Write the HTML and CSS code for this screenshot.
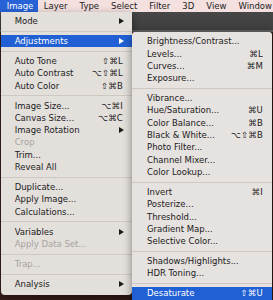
FILE: index.html
```html
<html lang="en">
<head>
    <meta charset="UTF-8">
    <title>Image Menu</title>
    <link rel="stylesheet" href="styles.css">
</head>
<body>

    <!-- Top menu bar -->
    <div class="menubar">
        <span class="title active">Image</span>
        <span class="title">Layer</span>
        <span class="title">Type</span>
        <span class="title">Select</span>
        <span class="title">Filter</span>
        <span class="title">3D</span>
        <span class="title">View</span>
        <span class="title">Window</span>
    </div>

    <!-- App toolbar and canvas behind the menus -->
    <div class="toolbar"></div>
    <div class="canvas"></div>

    <!-- Image menu -->
    <ul class="menu main-menu">
        <li class="item">Mode<i class="arrow"></i></li>
        <li class="sep"></li>
        <li class="item active">Adjustments<i class="arrow"></i></li>
        <li class="sep"></li>
        <li class="item">Auto Tone<span class="key">⇧⌘L</span></li>
        <li class="item">Auto Contrast<span class="key">⌥⇧⌘L</span></li>
        <li class="item">Auto Color<span class="key">⇧⌘B</span></li>
        <li class="sep"></li>
        <li class="item">Image Size...<span class="key">⌥⌘I</span></li>
        <li class="item">Canvas Size...<span class="key">⌥⌘C</span></li>
        <li class="item">Image Rotation<i class="arrow"></i></li>
        <li class="item disabled">Crop</li>
        <li class="item">Trim...</li>
        <li class="item">Reveal All</li>
        <li class="sep"></li>
        <li class="item">Duplicate...</li>
        <li class="item">Apply Image...</li>
        <li class="item">Calculations...</li>
        <li class="sep"></li>
        <li class="item">Variables<i class="arrow"></i></li>
        <li class="item disabled">Apply Data Set...</li>
        <li class="sep"></li>
        <li class="item disabled">Trap...</li>
        <li class="sep"></li>
        <li class="item">Analysis<i class="arrow"></i></li>
    </ul>

    <!-- Adjustments submenu -->
    <ul class="menu sub-menu">
        <li class="item">Brightness/Contrast...</li>
        <li class="item">Levels...<span class="key">⌘L</span></li>
        <li class="item">Curves...<span class="key">⌘M</span></li>
        <li class="item">Exposure...</li>
        <li class="sep"></li>
        <li class="item">Vibrance...</li>
        <li class="item">Hue/Saturation...<span class="key">⌘U</span></li>
        <li class="item">Color Balance...<span class="key">⌘B</span></li>
        <li class="item">Black &amp; White...<span class="key">⌥⇧⌘B</span></li>
        <li class="item">Photo Filter...</li>
        <li class="item">Channel Mixer...</li>
        <li class="item">Color Lookup...</li>
        <li class="sep"></li>
        <li class="item">Invert<span class="key">⌘I</span></li>
        <li class="item">Posterize...</li>
        <li class="item">Threshold...</li>
        <li class="item">Gradient Map...</li>
        <li class="item">Selective Color...</li>
        <li class="sep"></li>
        <li class="item">Shadows/Highlights...</li>
        <li class="item">HDR Toning...</li>
        <li class="sep"></li>
        <li class="item active">Desaturate<span class="key">⇧⌘U</span></li>
    </ul>

</body>
</html>
```

FILE: styles.css
```css
/* Page */
body {
    margin: 0;
    width: 273px;
    height: 300px;
    overflow: hidden;
    display: flex;
    flex-direction: column;
    font-family: "DejaVu Sans", sans-serif;
    font-size: 8.5px;
    color: #1b1b1b;
    background-color: #2f1c18;
}

/* Menu bar */
.menubar {
    height: 12px;
    display: flex;
    background-color: #f3e0df;
    line-height: 12px;
}

.title {
    padding: 0 6px;
}

.title.active {
    padding-left: 6.7px;
    padding-right: 4.5px;
    background-color: #2763d7;
    color: #fff;
}

/* Photoshop toolbar behind the menus */
.toolbar {
    height: 18px;
    background: linear-gradient(#474747, #3e3e3e);
    border-bottom: 2px solid #5e5e5e;
}

.canvas {
    flex: 1;
    background: linear-gradient(90deg, #3a201b, #2a1714);
}

/* Dropdown menus */
.menu {
    position: absolute;
    margin: 0;
    list-style: none;
    background-color: #e3dfdb;
    box-shadow: 0 3px 8px rgba(0, 0, 0, 0.45);
}

.main-menu {
    top: 12px;
    left: 1px;
    width: 131px;
    padding: 3px 0 5px;
    border-radius: 0 0 4px 4px;
}

.sub-menu {
    top: 32px;
    left: 132px;
    width: 140px;
    padding: 3.3px 0 10px;
    border-radius: 3px 3px 0 0;
    background-color: #e6e2df;
}

.item {
    height: 12.3px;
    line-height: 12.3px;
    display: flex;
    align-items: center;
    justify-content: space-between;
    padding: 0 9px 0 13.7px;
    white-space: nowrap;
}

.sub-menu .item {
    padding-left: 15px;
}

.item.active {
    background-color: #2160d4;
    color: #fff;
}

.item.disabled {
    color: #a8a4a1;
}

.sep {
    height: 1px;
    margin: 3.35px 0;
    background-color: #cdc8c4;
}

.key {
    letter-spacing: 0.2px;
}

/* Submenu arrow */
.arrow {
    width: 0;
    height: 0;
    margin-right: -1px;
    border-left: 5px solid #1b1b1b;
    border-top: 3px solid transparent;
    border-bottom: 3px solid transparent;
}

.active .arrow {
    border-left-color: #fff;
}
```
